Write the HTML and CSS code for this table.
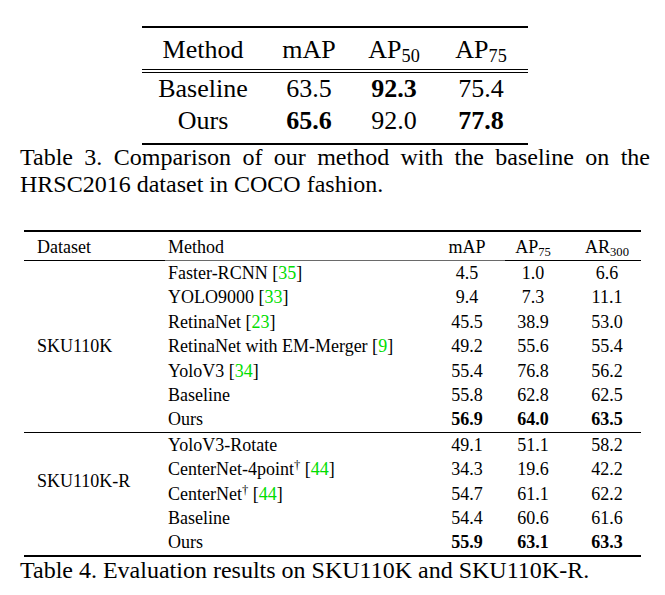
FILE: index.html
```html
<!DOCTYPE html>
<html>
<head>
<meta charset="utf-8">
<link rel="stylesheet" href="styles.css">
</head>
<body>
<div class="page">
  <div class="t3">
    <div class="t3-row t3-head">
      <div>Method</div><div>mAP</div><div>AP<sub class="sub">50</sub></div><div>AP<sub class="sub">75</sub></div>
    </div>
    <div class="dbl-rule"></div>
    <div class="t3-body">
      <div class="t3-row">
        <div>Baseline</div><div>63.5</div><div class="b">92.3</div><div>75.4</div>
      </div>
      <div class="t3-row">
        <div>Ours</div><div class="b">65.6</div><div>92.0</div><div class="b">77.8</div>
      </div>
    </div>
  </div>
  <p class="cap cap3">Table 3. Comparison of our method with the baseline on the HRSC2016 dataset in COCO fashion.</p>

  <div class="t4">
    <div class="t4-row t4-head">
      <div class="c-ds">Dataset</div><div class="c-m">Method</div><div class="c-n">mAP</div><div class="c-n">AP<sub class="sub">75</sub></div><div class="c-n">AR<sub class="sub">300</sub></div>
    </div>
    <div class="head-rule"></div>
    <div class="grp">
      <div class="ds">SKU110K</div>
      <div class="rows">
        <div class="t4-row"><div class="c-m">Faster-RCNN [<span class="cite">35</span>]</div><div class="c-n">4.5</div><div class="c-n">1.0</div><div class="c-n">6.6</div></div>
        <div class="t4-row"><div class="c-m">YOLO9000 [<span class="cite">33</span>]</div><div class="c-n">9.4</div><div class="c-n">7.3</div><div class="c-n">11.1</div></div>
        <div class="t4-row"><div class="c-m">RetinaNet [<span class="cite">23</span>]</div><div class="c-n">45.5</div><div class="c-n">38.9</div><div class="c-n">53.0</div></div>
        <div class="t4-row"><div class="c-m">RetinaNet with EM-Merger [<span class="cite">9</span>]</div><div class="c-n">49.2</div><div class="c-n">55.6</div><div class="c-n">55.4</div></div>
        <div class="t4-row"><div class="c-m">YoloV3 [<span class="cite">34</span>]</div><div class="c-n">55.4</div><div class="c-n">76.8</div><div class="c-n">56.2</div></div>
        <div class="t4-row"><div class="c-m">Baseline</div><div class="c-n">55.8</div><div class="c-n">62.8</div><div class="c-n">62.5</div></div>
        <div class="t4-row"><div class="c-m">Ours</div><div class="c-n b">56.9</div><div class="c-n b">64.0</div><div class="c-n b">63.5</div></div>
      </div>
    </div>
    <div class="grp grp-r">
      <div class="ds ds-r">SKU110K-R</div>
      <div class="rows">
        <div class="t4-row"><div class="c-m">YoloV3-Rotate</div><div class="c-n">49.1</div><div class="c-n">51.1</div><div class="c-n">58.2</div></div>
        <div class="t4-row"><div class="c-m">CenterNet-4point<sup class="dag">†</sup> [<span class="cite">44</span>]</div><div class="c-n">34.3</div><div class="c-n">19.6</div><div class="c-n">42.2</div></div>
        <div class="t4-row"><div class="c-m">CenterNet<sup class="dag">†</sup> [<span class="cite">44</span>]</div><div class="c-n">54.7</div><div class="c-n">61.1</div><div class="c-n">62.2</div></div>
        <div class="t4-row"><div class="c-m">Baseline</div><div class="c-n">54.4</div><div class="c-n">60.6</div><div class="c-n">61.6</div></div>
        <div class="t4-row"><div class="c-m">Ours</div><div class="c-n b">55.9</div><div class="c-n b">63.1</div><div class="c-n b">63.3</div></div>
      </div>
    </div>
  </div>
  <p class="cap cap4">Table 4. Evaluation results on SKU110K and SKU110K-R.</p>
</div>
</body>
</html>
```
FILE: styles.css
```css
html, body {
  margin: 0;
  padding: 0;
  background: #fff;
}
body {
  font-family: "Liberation Serif", "Times New Roman", serif;
  color: #000;
}
.page {
  padding-top: 26px;
}
.b { font-weight: bold; }
.sub {
  font-size: 0.7em;
  vertical-align: -0.22em;
  line-height: 0;
}
.cite { color: #00dd00; }
.dag {
  font-size: 0.7em;
  vertical-align: 0.45em;
  line-height: 0;
}

/* Table 3 */
.t3 {
  margin-left: 142px;
  width: 386px;
  border-top: 2px solid #000;
  border-bottom: 2px solid #000;
  font-size: 26px;
}
.t3-row {
  display: grid;
  grid-template-columns: 122px 90px 80px 94px;
  text-align: center;
  line-height: 32px;
}
.t3-head {
  line-height: 33px;
  padding: 5px 0 3px;
}
.dbl-rule {
  height: 2px;
  border-top: 1px solid #000;
  border-bottom: 1px solid #000;
}
.t3-body {
  padding-bottom: 6px;
}

/* Captions */
.cap {
  margin: 0 0 0 20px;
  width: 630px;
  font-size: 24px;
  line-height: 27px;
  text-align: justify;
}
.cap3 { margin-top: -1px; }

/* Table 4 */
.t4 {
  margin: 32px 0 0 24px;
  width: 617px;
  border-top: 2px solid #000;
  border-bottom: 2px solid #000;
  font-size: 18px;
}
.t4-row {
  display: grid;
  grid-template-columns: 286px 52px 80px 68px;
  line-height: 24.4px;
  white-space: nowrap;
}
.t4-head {
  grid-template-columns: 131px 286px 52px 80px 68px;
  line-height: 26px;
  padding: 2px 0 0;
}
.head-rule {
  height: 1px;
  background: linear-gradient(to right, #000 0 141px, #6a6a6a 141px 481px, #000 481px);
}
.c-ds, .c-m { padding-left: 13px; }
.c-n { text-align: center; }
.grp {
  display: flex;
}
.grp-r {
  border-top: 1px solid #000;
}
.ds {
  width: 131px;
  flex: none;
  box-sizing: border-box;
  padding-left: 13px;
  align-self: center;
  line-height: 24px;
}
.ds-r {
  margin-bottom: 26px;
}
.rows {
  flex: 1;
}
```
